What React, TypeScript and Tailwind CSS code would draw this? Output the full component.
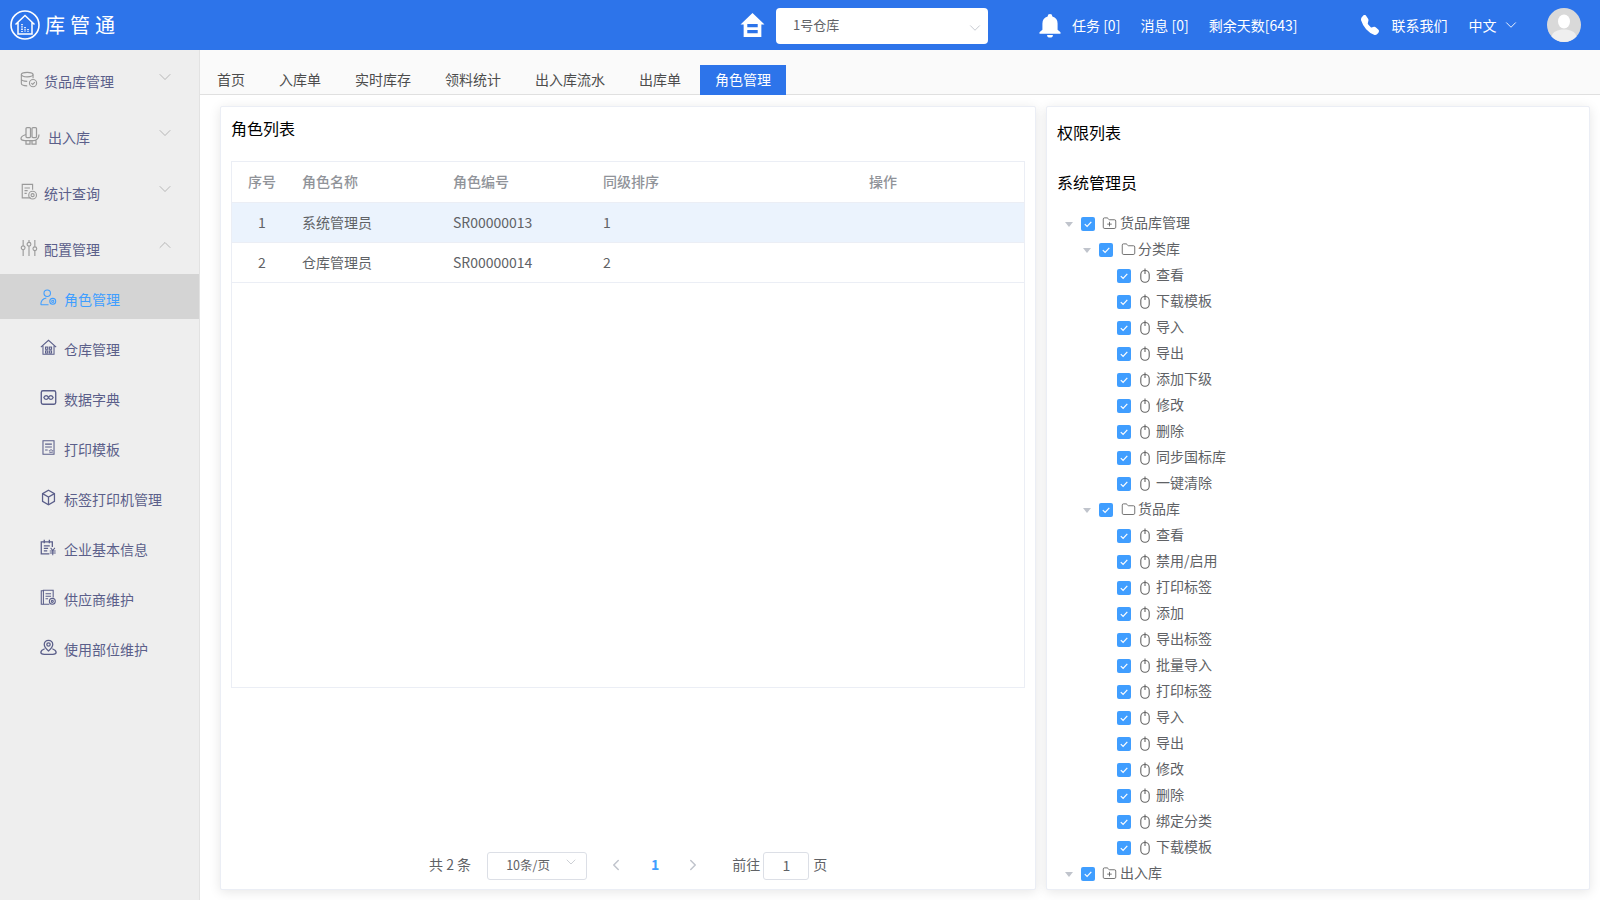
import React from "react";
import { ChevronDown, ChevronUp, ChevronLeft, ChevronRight, Folder, FolderPlus } from "lucide-react";
import { BsTelephoneFill } from "react-icons/bs";

/* sidebar icons, drawn by hand on a 20 box */
function Ico({ children, className }: { children: React.ReactNode; className?: string }) {
  return (
    <svg viewBox="0 0 20 20" fill="none" stroke="currentColor" strokeWidth="1.25" className={className}>
      {children}
    </svg>
  );
}

const icons: Record<string, React.ReactNode> = {
  goods: (
    <>
      <ellipse cx="8" cy="4" rx="6.5" ry="2.5" />
      <path d="M1.5 4v10c0 1.4 2.9 2.5 6.5 2.5M1.500 9c0 1.4 2.9 2.500 6.500 2.500M14.500 4v4" />
      <circle cx="14.500" cy="13.500" r="4" />
      <path d="M12.600 13.500l1.500 1.500 2.400-2.600" />
    </>
  ),
  inout: (
    <>
      <rect x="6" y="1.500" width="4.500" height="10" rx="1" />
      <rect x="12" y="1.500" width="4.500" height="10" rx="1" />
      <path d="M6 8.500C3 9.500 1 11 1 12.500c0 1.300 1.500 2 4 2h9c3 0 5-3 5-6M6 14.500v3.500h4v-3.500M12 14.500v3.500h4v-3.500" />
    </>
  ),
  stats: (
    <>
      <path d="M12 16.500H2.500v-15H14v6" />
      <path d="M5 5.500h6M5 8.500h3.500M5 11.500h2.500" />
      <circle cx="14" cy="13.500" r="4.300" />
      <circle cx="14" cy="13.500" r="1.700" />
    </>
  ),
  config: (
    <>
      <path d="M3.500 1v6.500M3.500 12v7M10 1v2.500M10 8v11M16.500 1v7.500M16.500 13v6" />
      <circle cx="3.500" cy="9.800" r="2.100" />
      <circle cx="10" cy="5.800" r="2.100" />
      <circle cx="16.500" cy="10.800" r="2.100" />
    </>
  ),
  role: (
    <>
      <circle cx="8.500" cy="5" r="3.800" />
      <path d="M1 18.500c0-4.500 2.500-7.500 6.500-8M1 18.500h9" />
      <circle cx="15" cy="14.500" r="3.500" />
      <circle cx="15" cy="14.500" r="1.300" />
    </>
  ),
  house: (
    <>
      <path d="M1 9.500L10 1.500l9 8M3.500 8v10h13V8" />
      <rect x="6.500" y="9.500" width="2.600" height="2.600" />
      <rect x="11" y="9.500" width="2.600" height="2.600" />
      <rect x="6.500" y="14" width="2.600" height="2.600" />
      <rect x="11" y="14" width="2.600" height="2.600" />
    </>
  ),
  dict: (
    <>
      <rect x="1.500" y="2" width="17" height="16" rx="2" strokeWidth="1.600" />
      <path d="M4.500 10c1.500-3 4-3 5.500 0s4 3 5.500 0c-1.500-3-4-3-5.500 0s-4 3-5.500 0z" strokeWidth="1.500" />
    </>
  ),
  print: (
    <>
      <path d="M16.500 2v16h-13V2z" />
      <path d="M6 6h8M6 9.500h8M6 13h3" />
      <path d="M13 12l.8 1.500 1.500.2-1 1.100.2 1.500-1.500-.7-1.500.7.2-1.500-1-1.100 1.500-.2z" strokeWidth="0.800" />
    </>
  ),
  box: (
    <>
      <path d="M10 1.500l7 4v9l-7 4-7-4v-9z" strokeWidth="1.500" />
      <path d="M3 5.500l7 4 7-4M10 9.500v9" strokeWidth="1.500" />
    </>
  ),
  company: (
    <>
      <path d="M11 17.500H1.500V3.500h13v6" strokeWidth="1.500" />
      <path d="M5 1v4M11 1v4M4.500 8h7M4.500 11h5M4.500 14h4" strokeWidth="1.500" />
      <path d="M12.500 10.500l2.500 3 2.500-3M11.500 14h7M11.500 16.500h7M15 13.500v5.500" strokeWidth="1.200" />
    </>
  ),
  supplier: (
    <>
      <path d="M4 18H1.500V2H4" />
      <path d="M15.500 10V1.500H4V18h7" />
      <path d="M6.500 5.500h6.500M6.500 8.500h6.500M6.500 11.500h3" />
      <circle cx="14.500" cy="14.500" r="3.500" />
      <circle cx="14.500" cy="14.500" r="1.200" />
    </>
  ),
  place: (
    <>
      <path d="M10 14c-3-2.500-5-5-5-7.500a5 5 0 0 1 10 0C15 9 13 11.500 10 14z" strokeWidth="1.500" />
      <circle cx="10" cy="6.500" r="2" strokeWidth="1.500" />
      <path d="M5.500 11.500C3 12.500 1 14 1 15.500s2 2.500 4 2.500h10c2 0 4-1 4-2.500s-2-3-4.500-4" strokeWidth="1.500" />
    </>
  ),
};

const topMenus = [
  { label: "货品库管理", icon: "goods", open: false, iconSize: "h-[18px] w-[18px]", gap: "ml-[6px]" },
  { label: "出入库", icon: "inout", open: false, iconSize: "h-[20px] w-[20px]", gap: "ml-[8px]" },
  { label: "统计查询", icon: "stats", open: false, iconSize: "h-[18px] w-[18px]", gap: "ml-[6px]" },
  { label: "配置管理", icon: "config", open: true, iconSize: "h-[18px] w-[18px]", gap: "ml-[6px]" },
];

const subMenus = [
  { label: "角色管理", icon: "role", active: true },
  { label: "仓库管理", icon: "house" },
  { label: "数据字典", icon: "dict" },
  { label: "打印模板", icon: "print" },
  { label: "标签打印机管理", icon: "box" },
  { label: "企业基本信息", icon: "company" },
  { label: "供应商维护", icon: "supplier" },
  { label: "使用部位维护", icon: "place" },
];

const tabs = ["首页", "入库单", "实时库存", "领料统计", "出入库流水", "出库单"];

const roles = [
  { no: 1, name: "系统管理员", code: "SR00000013", sort: 1 },
  { no: 2, name: "仓库管理员", code: "SR00000014", sort: 2 },
];

const tree: { label: string; level: number }[] = [
  { label: "货品库管理", level: 0 },
  { label: "分类库", level: 1 },
  ...["查看", "下载模板", "导入", "导出", "添加下级", "修改", "删除", "同步国标库", "一键清除"].map((label) => ({ label, level: 2 })),
  { label: "货品库", level: 1 },
  ...["查看", "禁用/启用", "打印标签", "添加", "导出标签", "批量导入", "打印标签", "导入", "导出", "修改", "删除", "绑定分类", "下载模板"].map((label) => ({ label, level: 2 })),
  { label: "出入库", level: 0 },
];

function Checkbox() {
  return (
    <span className="flex h-[14px] w-[14px] shrink-0 items-center justify-center rounded-[2px] bg-[#409eff]">
      <svg viewBox="0 0 14 14" className="h-[14px] w-[14px]" fill="none" stroke="white" strokeWidth="1.200">
        <path d="M3.800 7.200l2.300 2.300 4.200-4.700" />
      </svg>
    </span>
  );
}

function ClickIcon() {
  return (
    <svg viewBox="0 0 10 15" className="-mt-[2px] ml-[9px] mr-[6px] h-[15px] w-[10px] text-[#666]" fill="none" stroke="currentColor" strokeWidth="1.100">
      <rect x="0.800" y="2.500" width="8.400" height="11.800" rx="4" />
      <path d="M5 0.500V6" />
    </svg>
  );
}

function TreeRow({ label, level }: { label: string; level: number }) {
  const padding = level === 0 ? "pl-0" : level === 1 ? "pl-[18px]" : "pl-[36px]";
  return (
    <div className={`flex h-[26px] items-center text-sm text-[#606266] ${padding}`}>
      <span className="flex w-[24px] shrink-0 justify-center">
        {level < 2 && (
          <span className="h-0 w-0 border-x-[4px] border-t-[5px] border-x-transparent border-t-[#c0c4cc]" />
        )}
      </span>
      <Checkbox />
      {level === 0 && <FolderPlus size={15} strokeWidth={1.3} className="-mt-[2px] ml-[7px] mr-[3px] text-[#555]" />}
      {level === 1 && <Folder size={15} strokeWidth={1.3} className="-mt-[2px] ml-[8px] mr-[2px] text-[#555]" />}
      {level === 2 && <ClickIcon />}
      <span className="-mt-[4px]">{label}</span>
    </div>
  );
}

function Header() {
  return (
    <header className="flex h-[50px] shrink-0 items-center bg-[#2d74ea] text-white">
      <div className="ml-[10px] flex items-center">
        <svg viewBox="0 0 30 30" className="h-[30px] w-[30px]" fill="none" stroke="white">
          <circle cx="15" cy="15" r="14" strokeWidth="1.600" />
          <path d="M5.500 14.500L15 5.500l9.500 9M8 12.500V24h14V12.500" strokeWidth="1.500" />
          <path d="M12 14v8M15 17v5M18 19v3" strokeWidth="1.600" strokeDasharray="1.300 1" />
        </svg>
        <span className="ml-[5px] text-[20px] leading-[26px] tracking-[5px]">库管通</span>
      </div>
      {/* warehouse picker */}
      <svg viewBox="0 0 24 24" preserveAspectRatio="none" className="ml-[620px] h-[26px] w-[25px]" fill="white">
        <path d="M12 1L0.500 11.500H3.500V23H20.500V11.500H23.500L12 1ZM7 11H17V14H7V11ZM7 16.500H17V19.500H7V16.500Z" fillRule="evenodd" />
      </svg>
      <div className="ml-[11px] mt-[2px] flex h-[36px] w-[212px] items-center justify-between rounded-[4px] bg-white pl-[17px] pr-[4px] text-[13px] text-[#606266]">
        <span className="-mt-[2px]">1号仓库</span>
        <ChevronDown size={18} strokeWidth={1} className="mt-[4px] text-[#b4b8c0]" />
      </div>
      <svg viewBox="0 0 24 24" preserveAspectRatio="none" className="ml-[48px] h-[25px] w-[28px]" fill="white">
        <path d="M12 1a2 2 0 0 0-2 2v.4C7 4.300 5.500 7 5.500 10v6L3 18.500V20h18v-1.500L18.500 16v-6c0-3-1.500-5.700-4.500-6.600V3a2 2 0 0 0-2-2zM9.500 21a2.500 2.500 0 0 0 5 0z" />
      </svg>
      <span className="ml-[8px] text-sm">任务 [0]</span>
      <span className="ml-[20px] text-sm">消息 [0]</span>
      <span className="ml-[20px] text-sm">剩余天数[643]</span>
      <BsTelephoneFill size={20} className="ml-[62px] scale-x-[0.9]" />
      <span className="ml-[12px] text-sm">联系我们</span>
      <span className="ml-[21px] text-sm">中文</span>
      <ChevronDown size={18} strokeWidth={1.2} className="ml-[5px]" />
      <svg viewBox="0 0 34 34" className="ml-[27px] h-[34px] w-[34px]">
        <circle cx="17" cy="17" r="17" fill="#d9d9d9" />
        <ellipse cx="17" cy="13.500" rx="6" ry="7" fill="white" />
        <path d="M4.500 28.500c1.500-5 6-7 12.500-7s11 2 12.500 7A17 17 0 0 1 17 34a17 17 0 0 1-12.500-5.500z" fill="#efefef" />
      </svg>
    </header>
  );
}

function Sidebar() {
  return (
    <aside className="h-full w-[200px] shrink-0 border-r border-[#e2e2e2] bg-[#eeeeee] pt-[3px] text-sm text-[#5b5f8a]">
      {topMenus.map((m) => (
        <div key={m.label} className="flex h-[56px] items-center pl-[20px] pr-[24px]">
          <Ico className={`-mt-[3px] shrink-0 text-[#9a9a9a] ${m.iconSize}`}>{icons[m.icon]}</Ico>
          <span className={`${m.gap} -mt-[1px] flex-1`}>{m.label}</span>
          {m.open ? (
            <ChevronUp size={20} strokeWidth={0.8} className="-mt-[8px] text-[#9a9a9a]" />
          ) : (
            <ChevronDown size={20} strokeWidth={0.8} className="-mt-[8px] text-[#9a9a9a]" />
          )}
        </div>
      ))}
      <div className="-mt-[3px] flex flex-col gap-[5px]">
        {subMenus.map((s) => (
          <div
            key={s.label}
            className={`flex h-[45px] items-center pl-[40px] pt-[5px] ${s.active ? "bg-[#d4d4d4] text-[#409eff]" : ""}`}
          >
            <Ico className="-mt-[3px] h-[17px] w-[17px] shrink-0">{icons[s.icon]}</Ico>
            <span className="-mt-[1px] ml-[7px]">{s.label}</span>
          </div>
        ))}
      </div>
    </aside>
  );
}

function RoleCard() {
  const cols = "grid grid-cols-[60px_151px_150px_266px_1fr]";
  return (
    <section className="flex w-[816px] flex-col rounded-[2px] border border-[#ebeef5] bg-white px-[10px] pb-[9px] pt-[9px] shadow-[0_2px_12px_rgba(0,0,0,0.1)]">
      <h2 className="text-base leading-[24px] text-black">角色列表</h2>
      <div className="mt-[21px] h-[527px] border border-[#ebeef5] text-sm">
        <div className={`${cols} h-[41px] items-center border-b border-[#ebeef5] pb-[2px] font-medium text-[#909399]`}>
          <span className="text-center">序号</span>
          <span className="pl-[10px]">角色名称</span>
          <span className="pl-[10px]">角色编号</span>
          <span className="pl-[10px]">同级排序</span>
          <span className="pl-[10px]">操作</span>
        </div>
        {roles.map((r, i) => (
          <div
            key={r.no}
            className={`${cols} h-[40px] items-center border-b border-[#ebeef5] pb-[2px] text-[#606266] ${i === 0 ? "bg-[#ebf3fd]" : ""}`}
          >
            <span className="text-center">{r.no}</span>
            <span className="pl-[10px]">{r.name}</span>
            <span className="pl-[10px]">{r.code}</span>
            <span className="pl-[10px]">{r.sort}</span>
            <span />
          </div>
        ))}
      </div>
      {/* pagination */}
      <div className="mt-auto flex h-[28px] items-center pl-[198px] text-sm text-[#606266]">
        <span className="-mt-[4px]">共 2 条</span>
        <div className="relative ml-[16px] flex h-[28px] w-[100px] items-center justify-center rounded-[3px] border border-[#dcdfe6] pb-[3px] pr-[18px] text-[12.5px]">
          10条/页
          <ChevronDown size={16} strokeWidth={1} className="absolute right-[7px] top-[1px] text-[#b4b8c0]" />
        </div>
        <ChevronLeft size={18} strokeWidth={2} className="-mt-[3px] ml-[20px] text-[#c0c4cc]" />
        <span className="-mt-[4px] ml-[26px] font-bold text-[#409eff]">1</span>
        <ChevronRight size={18} strokeWidth={2} className="-mt-[3px] ml-[25px] text-[#c0c4cc]" />
        <span className="-mt-[4px] ml-[30px]">前往</span>
        <div className="ml-[3px] flex h-[28px] w-[46px] items-center justify-center rounded-[3px] border border-[#dcdfe6] pb-[3px]">1</div>
        <span className="-mt-[4px] ml-[4px]">页</span>
      </div>
    </section>
  );
}

function PermissionCard() {
  return (
    <section className="w-[544px] rounded-[2px] border border-[#ebeef5] bg-white px-[10px] pt-[12px] shadow-[0_2px_12px_rgba(0,0,0,0.1)]">
      <h2 className="text-base leading-[26px] text-black">权限列表</h2>
      <h3 className="mt-[24px] text-base leading-[26px] text-black">系统管理员</h3>
      <div className="mt-[16px]">
        {tree.map((n, i) => (
          <TreeRow key={i} label={n.label} level={n.level} />
        ))}
      </div>
    </section>
  );
}

export default function App() {
  return (
    <div className="flex h-[900px] flex-col overflow-hidden bg-white font-['Noto_Sans_CJK_SC','Noto_Sans',sans-serif]">
      <Header />
      <div className="flex min-h-0 flex-1">
        <Sidebar />
        <main className="flex min-w-0 flex-1 flex-col">
          <nav className="flex h-[45px] shrink-0 items-end gap-[34px] border-b border-[#e0e0e0] bg-[#fafafa] pl-[17px] text-sm text-[#4d4d4d]">
            {tabs.map((t) => (
              <span key={t} className="flex h-[30px] items-center">
                {t}
              </span>
            ))}
            <span className="-mb-px -ml-[15px] flex h-[30px] items-center bg-[#2d74ea] px-[15px] pb-[2px] text-white">角色管理</span>
          </nav>
          <div className="flex flex-1 gap-[10px] pb-[10px] pl-[20px] pt-[11px]">
            <RoleCard />
            <PermissionCard />
          </div>
        </main>
      </div>
    </div>
  );
}
